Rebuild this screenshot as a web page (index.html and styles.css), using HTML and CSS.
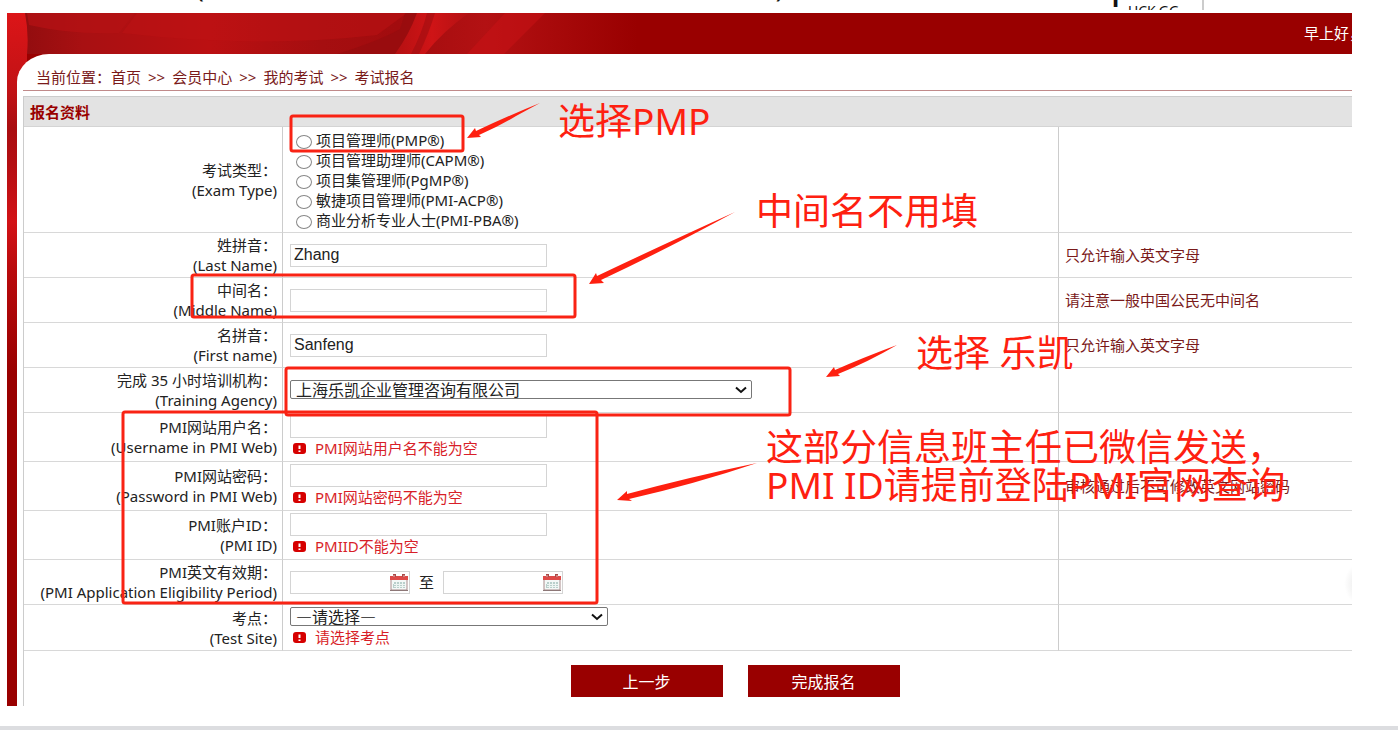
FILE: index.html
```html
<!DOCTYPE html>
<html lang="zh-CN">
<head>
<meta charset="utf-8">
<title>考试报名</title>
<link rel="stylesheet" href="styles.css">
</head>
<body>
<div class="doc">
  <div class="prev-line">
    <span class="prev-title">填写报名信息(未作说明的部分请按照个人真实情况如实填写即可)</span>
    <span class="prev-mark">l</span>
    <span class="prev-cell">UCK.GG</span>
  </div>

  <div class="frame">
    <svg class="swirl" width="630" height="360" viewBox="0 0 630 360" aria-hidden="true">
      <defs>
        <linearGradient id="fade" x1="0" x2="1" y1="0" y2="0">
          <stop offset="0" stop-color="#8c0c0e"/><stop offset=".12" stop-color="#a81012"/>
          <stop offset=".32" stop-color="#bb1012"/><stop offset=".5" stop-color="#a50e10"/>
          <stop offset=".62" stop-color="#a20c0e"/><stop offset=".76" stop-color="#b31113"/>
          <stop offset="1" stop-color="#990000"/>
        </linearGradient>
        <linearGradient id="side" x1="0" x2="0" y1="0" y2="1">
          <stop offset="0" stop-color="#dc1518"/><stop offset=".22" stop-color="#c01215"/>
          <stop offset=".32" stop-color="#a90d10"/><stop offset=".42" stop-color="#b40e12"/>
          <stop offset=".58" stop-color="#d21216"/><stop offset=".72" stop-color="#b80a0c"/>
          <stop offset="1" stop-color="#990000"/>
        </linearGradient>
        <linearGradient id="beam" x1="0" x2="1" y1="0" y2="0">
          <stop offset="0" stop-color="#b51012"/><stop offset=".5" stop-color="#cf1416"/><stop offset="1" stop-color="#b31113"/>
        </linearGradient>
      </defs>
      <rect width="630" height="41" fill="url(#fade)"/>
      <path d="M20 0H128L112 20Q66 22 22 12Z" fill="#b41214" opacity=".75"/>
      <path d="M130 0H400L370 22Q250 36 115 20Z" fill="#be1114" opacity=".5"/>
      <path d="M330 41Q372 28 393 16L398 0H412L390 41Z" fill="#8f0b0d" opacity=".5"/>
      <path d="M388 41Q402 22 410 0H462Q436 18 418 41Z" fill="url(#beam)"/>
      <path d="M404 41Q415 20 420 0H428Q422 20 412 41Z" fill="#9e0e10" opacity=".6"/>
      <path d="M460 41L498 0H538L497 41Z" fill="#c81315" opacity=".55"/>
      <path d="M0 0H18Q22 20 20 41V90H10V360H0Z" fill="url(#side)"/>
    </svg>
    <header class="topbar"><span class="greeting">早上好，</span></header>

    <main class="panel">
      <nav class="crumbs" aria-label="当前位置">当前位置：<a href="#">首页</a><span class="sep">&gt;&gt;</span><a href="#">会员中心</a><span class="sep">&gt;&gt;</span><a href="#">我的考试</a><span class="sep">&gt;&gt;</span><a href="#">考试报名</a></nav>

      <form class="form">
        <table class="grid">
          <colgroup><col class="c-label"><col class="c-field"><col class="c-note"></colgroup>
          <thead><tr><th class="section" colspan="3">报名资料</th></tr></thead>
          <tbody>
            <tr>
              <th class="label" scope="row">考试类型：<br>(Exam Type)</th>
              <td class="field choices">
                <label class="choice"><input type="radio" name="exam">项目管理师(PMP®)</label>
                <label class="choice"><input type="radio" name="exam">项目管理助理师(CAPM®)</label>
                <label class="choice"><input type="radio" name="exam">项目集管理师(PgMP®)</label>
                <label class="choice"><input type="radio" name="exam">敏捷项目管理师(PMI-ACP®)</label>
                <label class="choice"><input type="radio" name="exam">商业分析专业人士(PMI-PBA®)</label>
              </td>
              <td class="note"></td>
            </tr>
            <tr>
              <th class="label" scope="row"><label for="last">姓拼音：<br>(Last Name)</label></th>
              <td class="field"><input class="text" id="last" type="text" value="Zhang"></td>
              <td class="note">只允许输入英文字母</td>
            </tr>
            <tr>
              <th class="label" scope="row"><label for="middle">中间名：<br>(Middle Name)</label></th>
              <td class="field"><input class="text" id="middle" type="text"></td>
              <td class="note">请注意一般中国公民无中间名</td>
            </tr>
            <tr>
              <th class="label" scope="row"><label for="first">名拼音：<br>(First name)</label></th>
              <td class="field"><input class="text" id="first" type="text" value="Sanfeng"></td>
              <td class="note">只允许输入英文字母</td>
            </tr>
            <tr>
              <th class="label" scope="row"><label for="agency">完成 35 小时培训机构：<br>(Training Agency)</label></th>
              <td class="field">
                <span class="pick pick-wide"><select id="agency"><option>上海乐凯企业管理咨询有限公司</option></select><svg class="chev" width="12" height="8" viewBox="0 0 12 8" aria-hidden="true"><path d="M1 1.500L6 6L11 1.500"/></svg></span>
              </td>
              <td class="note"></td>
            </tr>
            <tr>
              <th class="label" scope="row"><label for="user">PMI网站用户名：<br>(Username in PMI Web)</label></th>
              <td class="field"><input class="text" id="user" type="text">
                <p class="error"><svg class="bang" width="13" height="12" viewBox="0 0 13 12" aria-hidden="true"><rect width="13" height="11" rx="3"/><path d="M6.500 2.500V6M6.500 7.500V9"/></svg>PMI网站用户名不能为空</p></td>
              <td class="note"></td>
            </tr>
            <tr>
              <th class="label" scope="row"><label for="pass">PMI网站密码：<br>(Password in PMI Web)</label></th>
              <td class="field"><input class="text" id="pass" type="password">
                <p class="error"><svg class="bang" width="13" height="12" viewBox="0 0 13 12" aria-hidden="true"><rect width="13" height="11" rx="3"/><path d="M6.500 2.500V6M6.500 7.500V9"/></svg>PMI网站密码不能为空</p></td>
              <td class="note">审核通过后不可修改英文网站密码</td>
            </tr>
            <tr>
              <th class="label" scope="row"><label for="pmiid">PMI账户ID：<br>(PMI ID)</label></th>
              <td class="field"><input class="text" id="pmiid" type="text">
                <p class="error"><svg class="bang" width="13" height="12" viewBox="0 0 13 12" aria-hidden="true"><rect width="13" height="11" rx="3"/><path d="M6.500 2.500V6M6.500 7.500V9"/></svg>PMIID不能为空</p></td>
              <td class="note"></td>
            </tr>
            <tr>
              <th class="label" scope="row"><label for="from">PMI英文有效期：<br>(PMI Application Eligibility Period)</label></th>
              <td class="field">
                <div class="range">
                  <span class="date"><input class="text" id="from" type="text"><svg class="cal" width="18" height="17" viewBox="0 0 18 17" aria-hidden="true"><rect x="1" y="5" width="16" height="11" fill="#f4f8f7" stroke="#a98c8c"/><path d="M0 2H18V6H0Z" fill="#dd4a48"/><path d="M3 0H6V3H3ZM12 0H15V3H12Z" fill="#a84a48"/><path d="M4 1V3M14 1V3" stroke="#f3b3b0"/><path d="M4 8H15V14H3V10H4Z" fill="#b9cfcb"/><path d="M4 10.500H15M4 12.500H15M6.500 8V14M9.500 8V14M12.500 8V14" stroke="#eef5f3"/><path d="M0 16.500H18" stroke="#8d7777"/></svg></span>
                  <label for="to">至</label>
                  <span class="date"><input class="text" id="to" type="text"><svg class="cal" width="18" height="17" viewBox="0 0 18 17" aria-hidden="true"><rect x="1" y="5" width="16" height="11" fill="#f4f8f7" stroke="#a98c8c"/><path d="M0 2H18V6H0Z" fill="#dd4a48"/><path d="M3 0H6V3H3ZM12 0H15V3H12Z" fill="#a84a48"/><path d="M4 1V3M14 1V3" stroke="#f3b3b0"/><path d="M4 8H15V14H3V10H4Z" fill="#b9cfcb"/><path d="M4 10.500H15M4 12.500H15M6.500 8V14M9.500 8V14M12.500 8V14" stroke="#eef5f3"/><path d="M0 16.500H18" stroke="#8d7777"/></svg></span>
                </div>
              </td>
              <td class="note"></td>
            </tr>
            <tr>
              <th class="label" scope="row"><label for="site">考点：<br>(Test Site)</label></th>
              <td class="field">
                <span class="pick pick-mid"><select id="site"><option>—请选择—</option></select><svg class="chev" width="12" height="8" viewBox="0 0 12 8" aria-hidden="true"><path d="M1 1.500L6 6L11 1.500"/></svg></span>
                <p class="error"><svg class="bang" width="13" height="12" viewBox="0 0 13 12" aria-hidden="true"><rect width="13" height="11" rx="3"/><path d="M6.500 2.500V6M6.500 7.500V9"/></svg>请选择考点</p></td>
              <td class="note"></td>
            </tr>
          </tbody>
        </table>
        <div class="actions">
          <button class="btn" type="button">上一步</button>
          <button class="btn" type="button">完成报名</button>
        </div>
      </form>
    </main>
    <span class="float-shade"></span>
  </div>

  <div class="marks">
    <svg class="shapes" width="1398" height="726" viewBox="0 0 1398 726" aria-hidden="true">
      <g class="boxes">
        <rect x="291" y="116" width="172" height="35" rx="2"/>
        <rect x="192" y="275" width="383" height="42" rx="2"/>
        <rect x="286" y="368" width="504" height="47" rx="2"/>
        <rect x="123" y="412" width="474" height="191" rx="2"/>
      </g>
      <g class="arrows">
        <path d="M540 103Q510 115 476 131L475 128L467 138L481 137L479 135Q500 126 516 116Z"/>
        <path d="M735 212Q660 246 597 276L596 273L589 284L604 283L601 280Q665 250 735 212Z"/>
        <path d="M897 345Q862 358 835 370L834 367L826 377L840 376L838 374Q868 362 897 345Z"/>
        <path d="M757 463Q690 477 627 494L627 491L617 500L632 501L629 499Q695 484 757 463Z"/>
      </g>
    </svg>
    <p class="tip tip-pmp">选择PMP</p>
    <p class="tip tip-middle">中间名不用填</p>
    <p class="tip tip-agency">选择 乐凯</p>
    <p class="tip tip-info">这部分信息班主任已微信发送，<br>PMI ID请提前登陆PMI官网查询</p>
  </div>
  <div class="rule"></div>
</div>
</body>
</html>
```
FILE: styles.css
```css
* { box-sizing: border-box; }

body {
  margin: 0;
  background: #fff;
  color: #222;
  font: 15px/20px "Noto Sans", "Noto Sans CJK SC", sans-serif;
}

p { margin: 0; }

.doc { position: relative; overflow: hidden; }

/* tail of the paragraph above */
.prev-line {
  display: flex;
  align-items: flex-end;
  height: 10px;
  margin-bottom: 3px;
  padding-left: 40px;
  overflow: hidden;
  color: #111;
}
.prev-title {
  width: 1072px;
  font-size: 26px;
  line-height: 24px;
  padding-bottom: 11px;
  white-space: nowrap;
}
.prev-mark { width: 16px; font-size: 24px; font-weight: 700; line-height: 24px; }
.prev-cell {
  width: 76px;
  height: 10px;
  padding-top: 3px;
  border-right: 2px solid #ccc;
  font-size: 14px;
  line-height: 16px;
}

.frame {
  position: relative;
  margin: 0 46px 0 7px;
  padding-left: 10px;
  background: #900;
  overflow: hidden;
}
.swirl { position: absolute; left: 0; top: 0; }

.topbar {
  position: relative;
  display: flex;
  justify-content: flex-end;
  height: 41px;
  padding-top: 10px;
  color: #fff;
}
.greeting { width: 48px; overflow: hidden; white-space: nowrap; }

.panel {
  position: relative;
  padding-left: 6px;
  background: #fff;
  border-top-left-radius: 32px 28px;
}

.crumbs {
  height: 37px;
  margin-bottom: 5px;
  padding: 13px 0 0 13px;
  border-bottom: 1px solid #c08a8a;
  color: #7a1a1a;
}
.crumbs a { color: inherit; text-decoration: none; }
.sep { margin: 0 7px; }

.form { border-left: 1px solid #ccc; }

.grid { width: 100%; table-layout: fixed; border-spacing: 0; }
.c-label { width: 258px; }
.c-note { width: 294px; }

.section {
  height: 31px;
  padding: 0 6px;
  background: #e3e3e3;
  border-top: 1px solid #ccc;
  border-bottom: 1px solid #d4d4d4;
  color: #900;
  font-weight: 700;
  text-align: left;
}
.label {
  padding: 2px 5px;
  border-bottom: 1px solid #d8d8d8;
  font-weight: 400;
  text-align: right;
}
.field, .note {
  padding: 2px 7px;
  border-bottom: 1px solid #d8d8d8;
  border-left: 1px solid #ccc;
}
.note { padding: 2px 6px; color: #7a1a1a; }

.choices { padding-top: 3px; }
.choice { display: flex; align-items: center; gap: 4px; margin-left: 6px; }
.choice input {
  appearance: none;
  width: 16px;
  height: 14px;
  margin: 4px 0 0;
  border: 1px solid #888;
  border-radius: 50%;
  background: #fff;
}

.text {
  display: block;
  width: 257px;
  height: 23px;
  padding: 0 3px;
  border: 1px solid #d4d4d4;
  background: #fff;
  color: #222;
  font: 16px/20px "Liberation Sans", "Noto Sans CJK SC", sans-serif;
}

.error {
  display: flex;
  align-items: center;
  gap: 9px;
  padding-left: 3px;
  color: #d81e28;
  line-height: 21px;
}
.bang rect { fill: #d60000; }
.bang path { stroke: #fff; stroke-width: 2; }

.pick { position: relative; display: block; height: 20px; }
.pick-wide { width: 462px; }
.pick-mid { width: 318px; }
.pick select {
  appearance: none;
  display: block;
  width: 100%;
  height: 19px;
  padding: 0 24px 0 5px;
  border: 1px solid #777;
  border-radius: 2px;
  background: #fff;
  color: #222;
  font: 16px/17px "Noto Sans CJK SC", sans-serif;
}
.chev { position: absolute; right: 5px; top: 6px; fill: none; stroke: #111; stroke-width: 2; }

.range { display: flex; align-items: center; gap: 9px; }
.date { position: relative; }
.date .text { width: 120px; padding-right: 24px; }
.cal { position: absolute; right: 2px; top: 3px; }

.actions {
  display: flex;
  justify-content: center;
  gap: 25px;
  padding: 14px 0 9px 94px;
}
.btn {
  width: 152px;
  height: 32px;
  border: 0;
  background: #900;
  color: #fff;
  font: 16px/20px "Noto Sans CJK SC", sans-serif;
}

.float-shade {
  position: absolute;
  right: -42px;
  top: 546px;
  width: 50px;
  height: 50px;
  border-radius: 50%;
  background: radial-gradient(circle, #eee 40%, #fff0 70%);
}

.rule { height: 4px; margin-top: 20px; background: #dcdde0; }

/* red notes drawn over the form */
.marks { position: absolute; left: 0; top: 0; pointer-events: none; }
.shapes { display: block; }
.boxes { fill: none; stroke: #f92314; stroke-width: 3; }
.arrows { fill: #fe2010; }
.tip {
  position: absolute;
  color: #fe2010;
  font: 37px/38px "Noto Sans", "Noto Sans CJK SC", sans-serif;
  white-space: nowrap;
}
.tip-pmp { left: 558px; top: 102px; }
.tip-middle { left: 756px; top: 192px; }
.tip-agency { left: 916px; top: 334px; }
.tip-info { left: 766px; top: 428px; }
```
